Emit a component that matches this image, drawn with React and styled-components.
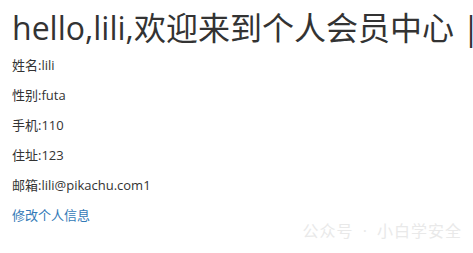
import React from "react";
import styled, { createGlobalStyle } from "styled-components";

const Global = createGlobalStyle`
  html, body { margin: 0; padding: 0; background: #fff; }
  body {
    font-family: "Open Sans", "Noto Sans CJK SC", sans-serif;
    color: #333;
    font-size: 13px;
    line-height: 20px;
  }
`;

const Page = styled.div`
  position: relative;
  width: 473px;
  height: 253px;
  overflow: hidden;
  padding: 10px 12px 0;
  box-sizing: border-box;
`;

const Title = styled.h1`
  margin: 0 0 10px;
  font-size: 32px;
  font-weight: 400;
  line-height: 35px;
  white-space: nowrap;
  color: #333;
`;

const Info = styled.p`
  margin: 0 0 10px;
`;

const EditLink = styled.a`
  color: #337ab7;
  text-decoration: none;
`;

const Watermark = styled.div`
  position: absolute;
  right: 11px;
  bottom: 12px;
  font-size: 16px;
  line-height: 20px;
  color: #e9e9e9;
  letter-spacing: 1px;
  word-spacing: 4px;
  white-space: nowrap;
`;

export default function App() {
  return (
    <>
      <Global />
      <Page>
        <Title>hello,lili,欢迎来到个人会员中心 |</Title>
        <Info>姓名:lili</Info>
        <Info>性别:futa</Info>
        <Info>手机:110</Info>
        <Info>住址:123</Info>
        <Info>邮箱:lili@pikachu.com1</Info>
        <EditLink href="#">修改个人信息</EditLink>
        <Watermark>公众号 · 小白学安全</Watermark>
      </Page>
    </>
  );
}
